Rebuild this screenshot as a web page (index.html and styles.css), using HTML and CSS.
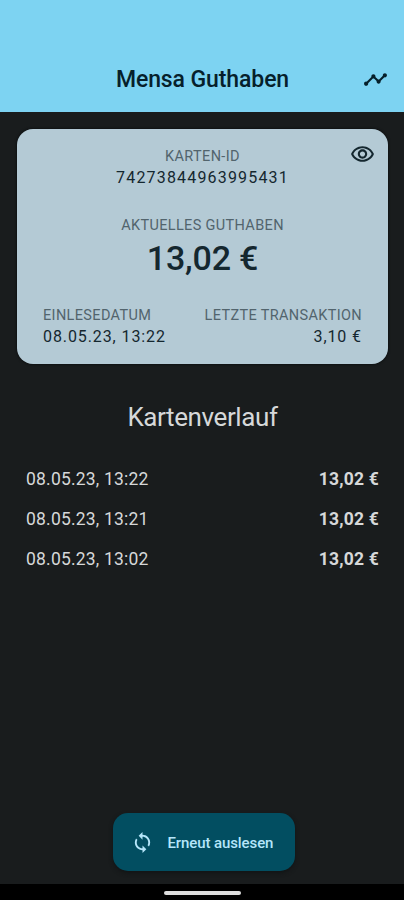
FILE: index.html
```
<!DOCTYPE html>
<html lang="de">
<head>
    <meta charset="UTF-8">
    <meta name="viewport" content="width=device-width, initial-scale=1.0">
    <title>Mensa Guthaben</title>
    <link rel="stylesheet" href="styles.css">
</head>
<body>
    <header class="app-bar">
        <h1 class="title">Mensa Guthaben</h1>
        <svg class="icon chart-icon" viewBox="0 0 24 24"><path d="M23 8c0 1.1-.9 2-2 2-.18 0-.35-.02-.51-.07l-3.56 3.55c.05.16.07.34.07.52 0 1.1-.9 2-2 2s-2-.9-2-2c0-.18.02-.36.07-.52l-2.55-2.55c-.16.05-.34.07-.52.07s-.36-.02-.52-.07l-4.55 4.56c.05.16.07.33.07.51 0 1.1-.9 2-2 2s-2-.9-2-2 .9-2 2-2c.18 0 .35.02.51.07l4.56-4.55C8.02 9.36 8 9.18 8 9c0-1.1.9-2 2-2s2 .9 2 2c0 .18-.02.36-.07.52l2.55 2.55c.16-.05.34-.07.52-.07s.36.02.52.07l3.55-3.56C19.02 8.35 19 8.18 19 8c0-1.1.9-2 2-2s2 .9 2 2z"/></svg>
    </header>

    <main class="content">
        <section class="card">
            <svg class="icon eye-icon" viewBox="0 0 24 24"><path d="M12 6c3.79 0 7.17 2.13 8.82 5.5C19.17 14.87 15.79 17 12 17s-7.17-2.13-8.82-5.5C4.83 8.13 8.21 6 12 6m0-2C7 4 2.73 7.11 1 11.5 2.73 15.89 7 19 12 19s9.27-3.11 11-7.5C21.27 7.11 17 4 12 4zm0 5c1.38 0 2.5 1.12 2.5 2.5S13.38 14 12 14s-2.5-1.12-2.5-2.5S10.62 9 12 9m0-2c-2.48 0-4.5 2.02-4.5 4.5S9.52 16 12 16s4.5-2.02 4.5-4.5S14.48 7 12 7z"/></svg>
            <div class="field">
                <div class="label">KARTEN-ID</div>
                <div class="value card-id">74273844963995431</div>
            </div>
            <div class="field field-balance">
                <div class="label">AKTUELLES GUTHABEN</div>
                <div class="balance">13,02 €</div>
            </div>
            <div class="card-footer">
                <div>
                    <div class="label">EINLESEDATUM</div>
                    <div class="value">08.05.23, 13:22</div>
                </div>
                <div class="right">
                    <div class="label">LETZTE TRANSAKTION</div>
                    <div class="value">3,10 €</div>
                </div>
            </div>
        </section>

        <h2 class="history-title">Kartenverlauf</h2>
        <ul class="history">
            <li><span>08.05.23, 13:22</span><span class="amount">13,02 €</span></li>
            <li><span>08.05.23, 13:21</span><span class="amount">13,02 €</span></li>
            <li><span>08.05.23, 13:02</span><span class="amount">13,02 €</span></li>
        </ul>

        <button class="scan-button">
            <svg class="icon sync-icon" viewBox="0 0 24 24"><path d="M12 4V1L8 5l4 4V6c3.31 0 6 2.69 6 6 0 1.01-.25 1.97-.7 2.8l1.46 1.46C19.54 15.03 20 13.57 20 12c0-4.42-3.58-8-8-8zm0 14c-3.31 0-6-2.69-6-6 0-1.01.25-1.97.7-2.8L5.24 7.74C4.46 8.97 4 10.43 4 12c0 4.42 3.58 8 8 8v3l4-4-4-4v3z"/></svg>
            <span>Erneut auslesen</span>
        </button>
    </main>

    <!-- Android gesture bar -->
    <div class="nav-bar"><div class="nav-handle"></div></div>
</body>
</html>
```
FILE: styles.css
```
* {
    box-sizing: border-box;
}

body {
    margin: 0;
    height: 900px;
    display: flex;
    flex-direction: column;
    overflow: hidden;
    background-color: #191c1d;
    color: #d6d8d9;
    font-family: Roboto, "Liberation Sans", sans-serif;
}

.icon {
    display: block;
    flex: none;
    fill: currentColor;
}

/* Top bar */
.app-bar {
    height: 112px;
    padding: 46px 16px 0;
    display: grid;
    grid-template-columns: 25px 1fr 25px;
    align-items: center;
    background-color: #7dd3f2;
    color: #06202b;
}

.title {
    grid-column: 2;
    margin: 0;
    padding: 2px 0 0 1px;
    font-size: 23px;
    font-weight: 500;
    line-height: 30px;
    letter-spacing: -0.1px;
    text-align: center;
    white-space: nowrap;
}

.chart-icon {
    width: 25px;
    height: 25px;
}

.content {
    flex: 1;
    display: flex;
    flex-direction: column;
    padding: 17px 16px 13px 17px;
}

/* Card */
.card {
    position: relative;
    height: 235px;
    padding: 18px 26px 0;
    border-radius: 16px;
    background-color: #b4cad5;
    color: #14272f;
    box-shadow: 0 0 3px #05080a;
}

.eye-icon {
    position: absolute;
    top: 13px;
    right: 13px;
    width: 25px;
    height: 25px;
}

.field {
    text-align: center;
}

.field-balance {
    margin-top: 28px;
}

.label {
    font-size: 14.5px;
    line-height: 20px;
    letter-spacing: 0.35px;
    color: #52646d;
}

.value {
    font-size: 16px;
    line-height: 21px;
    letter-spacing: 0.9px;
}

.card-id {
    letter-spacing: 1.17px;
}

.balance {
    font-size: 34px;
    font-weight: 500;
    line-height: 44px;
    letter-spacing: -0.2px;
}

.card-footer {
    display: flex;
    justify-content: space-between;
    margin-top: 26px;
}

.right {
    text-align: right;
}

/* History */
.history-title {
    margin: 35px 0 0;
    font-size: 26px;
    font-weight: 400;
    line-height: 36px;
    letter-spacing: -0.4px;
    text-align: center;
}

.history {
    margin: 24px 0 0;
    padding: 0 9px;
    list-style: none;
}

.history li {
    display: flex;
    justify-content: space-between;
    font-size: 17.5px;
    line-height: 40px;
    letter-spacing: 0.2px;
}

.history .amount {
    font-weight: 700;
}

/* Button */
.scan-button {
    display: flex;
    align-items: center;
    align-self: center;
    gap: 14px;
    width: 182px;
    height: 58px;
    margin: auto 0 0 2px;
    padding: 1px 0 0 18px;
    border: none;
    border-radius: 15px;
    background-color: #024e61;
    color: #b5e6fa;
    font-family: inherit;
    font-size: 15px;
    font-weight: 500;
    letter-spacing: -0.1px;
    white-space: nowrap;
    box-shadow: 0 2px 4px #111415;
}

.sync-icon {
    width: 23px;
    height: 23px;
}

.nav-bar {
    height: 16px;
    padding-top: 7px;
    background-color: #000;
}

.nav-handle {
    width: 77px;
    height: 4px;
    margin: 0 auto;
    border-radius: 2px;
    background-color: #dedede;
}
```
